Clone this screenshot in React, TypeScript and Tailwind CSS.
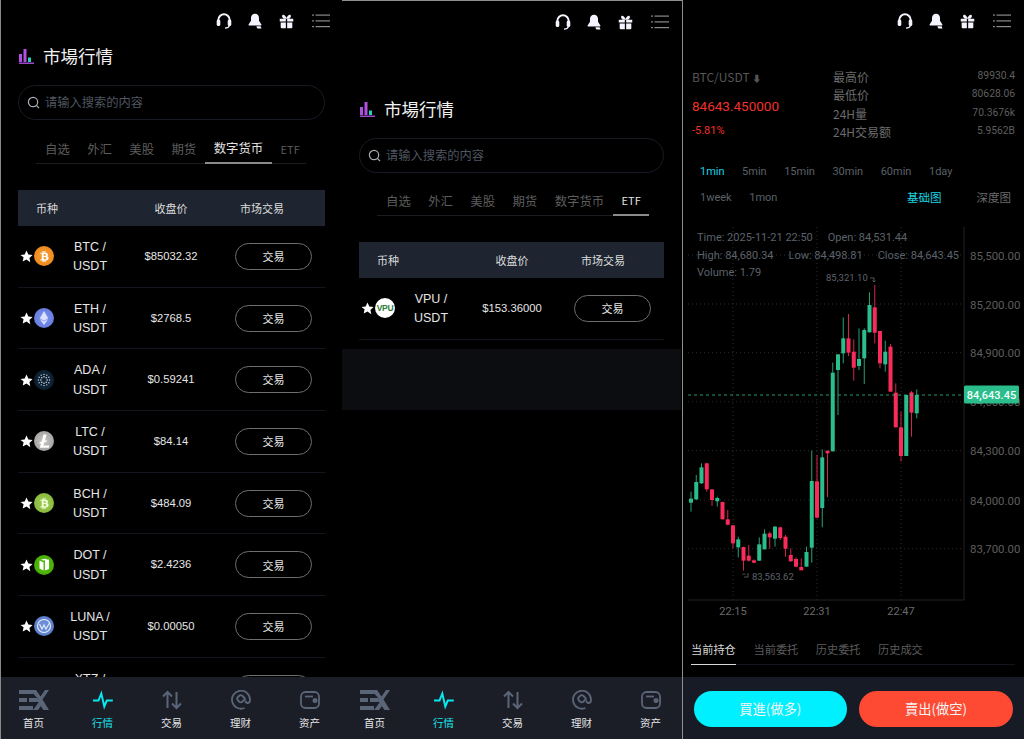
import { FaBtc, FaEthereum } from "react-icons/fa"
import type { ReactNode } from "react"

const coins = [
  { name: "BTC", price: "$85032.32" },
  { name: "ETH", price: "$2768.5" },
  { name: "ADA", price: "$0.59241" },
  { name: "LTC", price: "$84.14" },
  { name: "BCH", price: "$484.09" },
  { name: "DOT", price: "$2.4236" },
  { name: "LUNA", price: "$0.00050" },
  { name: "XTZ", price: "$0.5512" },
]

// wickTop, wickBottom, bodyTop, bodyBottom, up - measured at 3x, from the top of the chart
const candles: [number, number, number, number, number][] = [
  [815, 875, 836, 848, 1], [765, 840, 786, 838, 1], [730, 792, 742, 790, 1], [728, 815, 730, 808, 0],
  [808, 858, 808, 840, 0], [830, 860, 834, 844, 1], [845, 898, 846, 898, 0], [870, 916, 898, 914, 0],
  [915, 985, 916, 970, 0], [950, 1012, 958, 982, 1], [980, 1052, 981, 1022, 0], [975, 1025, 1007, 1022, 0],
  [1018, 1030, 1021, 1028, 0], [952, 1023, 973, 1022, 1], [928, 988, 941, 988, 1], [935, 986, 940, 952, 0],
  [918, 980, 920, 956, 1], [920, 960, 922, 954, 0], [945, 1010, 950, 986, 0], [985, 1025, 1005, 1024, 0],
  [1012, 1042, 1017, 1040, 0], [1015, 1050, 1041, 1051, 0], [980, 1040, 996, 1040, 1], [692, 1028, 783, 983, 1],
  [705, 895, 784, 893, 0], [688, 922, 712, 864, 1], [692, 832, 692, 700, 0], [428, 694, 458, 694, 1],
  [403, 585, 403, 450, 1], [292, 430, 355, 400, 1], [282, 408, 355, 398, 0], [358, 482, 395, 443, 0],
  [325, 450, 417, 438, 1], [325, 492, 330, 415, 1], [217, 337, 255, 337, 1], [195, 370, 262, 338, 0],
  [333, 445, 333, 430, 0], [362, 455, 395, 433, 1], [372, 515, 380, 515, 0], [490, 622, 518, 622, 0],
  [575, 725, 622, 708, 0], [525, 708, 525, 708, 1], [513, 650, 517, 578, 0], [508, 595, 525, 580, 1],
]

function TopBar() {
  return (
    <div className="h-[42px] shrink-0 flex items-center justify-end pr-[12px]">
      <svg viewBox="0 0 16 16" className="w-[16px] h-[16px] mr-[15px]" fill="none">
        <path d="M2.300 9V7a5.700 5.700 0 0 1 11.400 0v2" stroke="#f4f4ff" strokeWidth="2" />
        <rect x="0.700" y="6.500" width="3.600" height="6.500" rx="1.600" fill="#f4f4ff" />
        <rect x="11.700" y="6.500" width="3.600" height="6.500" rx="1.600" fill="#f4f4ff" />
        <path d="M13.500 12.500c-.6 1.800-2.200 2.600-4.500 2.600" stroke="#f4f4ff" strokeWidth="1.200" />
      </svg>
      <svg viewBox="0 0 16 16" className="w-[16px] h-[16px] mr-[16px]" fill="#f4f4ff">
        <path d="M8 .8c2.500 0 4 1.800 4 4.100v2.800l2.400 3.800c.2.400 0 .9-.5.900H2.100c-.5 0-.7-.5-.5-.9L4 7.700V4.900C4 2.600 5.500.8 8 .8z" />
        <path d="M9.500 13.200h4.100l.9 2.400h-3.300c-.9 0-1.600-1-1.700-2.400z" />
      </svg>
      <svg viewBox="0 0 16 16" className="w-[15px] h-[15px] mr-[18px]" fill="#f4f4ff">
        <path d="M.8 5h6.500v3H.8zM8.700 5h6.500v3H8.700zM1.800 9h5.500v6.300H3a1.200 1.200 0 0 1-1.200-1.200zM8.700 9h5.500v5.100c0 .7-.5 1.200-1.200 1.200H8.700z" />
        <path d="M3.800 1c1.300-.8 3.200.6 4.200 3.300C9 1.600 10.900.2 12.200 1c1.100.8.500 2.800-1.300 4H5.100C3.300 3.800 2.700 1.800 3.800 1z" />
      </svg>
      <svg viewBox="0 0 18 16" className="w-[18px] h-[16px]" fill="#8a8a8f">
        <rect x="0" y="1.500" width="2" height="1.200" />
        <rect x="3.500" y="1.500" width="14.500" height="1.200" />
        <rect x="0" y="7.300" width="2" height="1.200" />
        <rect x="3.500" y="7.300" width="14.500" height="1.200" />
        <rect x="0" y="13" width="2" height="1.200" />
        <rect x="3.500" y="13" width="14.500" height="1.200" />
      </svg>
    </div>
  )
}

function Title() {
  return (
    <div className="flex items-center h-[30px] pl-[18px] pb-[2px]">
      <svg viewBox="0 0 15 15" className="w-[15px] h-[15px] mr-[9px]">
        <rect x="0" y="5" width="3" height="8" fill="#b14fe0" />
        <rect x="4.500" y="0" width="3" height="13" fill="#b14fe0" />
        <rect x="9" y="8.500" width="3" height="4.500" fill="#22d3b6" />
        <rect x="0" y="13.500" width="15" height="1.500" fill="#9b45cc" />
      </svg>
      <span className="text-[17.500px] leading-[28px] text-[#f2f2f2] font-['Noto_Sans_CJK_SC',sans-serif]">市場行情</span>
    </div>
  )
}

function Search() {
  return (
    <div className="mx-[17px] h-[35px] rounded-full border border-[#171c24] flex items-center pl-[8px] pb-[1px] gap-[5px]">
      <svg viewBox="0 0 14 14" className="w-[13px] h-[13px]" fill="none" stroke="#a9adb3" strokeWidth="1.300">
        <circle cx="6.500" cy="6.500" r="5" />
        <path d="M10.200 10.200l2.800 2.800" />
      </svg>
      <span className="text-[12.250px] text-[#4f5561] font-['Noto_Sans_CJK_SC',sans-serif]">请输入搜索的内容</span>
    </div>
  )
}

function Tabs({ active }: { active: string }) {
  const tabs = ["自选", "外汇", "美股", "期货", "数字货币", "ETF"]
  return (
    <div className="ml-[35px] mr-[36px] mt-[14px] flex border-b border-[#1b1c22] h-[30px] pl-[9px] font-['Noto_Sans_CJK_SC',sans-serif]">
      {tabs.map((t, i) => (
        <div key={t} className={`flex items-center h-[30px] px-[8.700px] shrink-0 whitespace-nowrap ${t === "ETF" ? "text-[11px]" : "text-[12.400px]"} ${i === 0 ? "-ml-[8.700px]" : ""} ${active === t ? "text-[#e2e2e2] border-b-2 border-[#8a8a8a]" : "text-[#5c5c5c]"}`}>
          {t}
        </div>
      ))}
    </div>
  )
}

function TableHead() {
  return (
    <div className="mx-[17px] mt-[26px] h-[36px] bg-[#1e2530] flex items-center text-[11px] text-[#dcdcdc] font-['Noto_Sans_CJK_SC',sans-serif]">
      <span className="w-[108px] pl-[18px]">币种</span>
      <span className="w-[90px] text-center">收盘价</span>
      <span className="w-[92px] text-center">市场交易</span>
    </div>
  )
}

function CoinIcon({ name }: { name: string }) {
  if (name === "BTC") {
    return (
      <span className="w-[20px] h-[20px] rounded-full bg-[radial-gradient(circle,#f9a23b,#e9800f)] flex items-center justify-center text-white">
        <FaBtc className="w-[11px] h-[11px]" />
      </span>
    )
  }
  if (name === "ETH") {
    return (
      <span className="w-[20px] h-[20px] rounded-full bg-[radial-gradient(circle,#8097f0,#5a71d8)] flex items-center justify-center text-[#dbe2ff]">
        <FaEthereum className="w-[12px] h-[14px]" />
      </span>
    )
  }
  if (name === "ADA") {
    return (
      <span className="w-[20px] h-[20px] rounded-full bg-[#0e2133] flex items-center justify-center">
        <svg viewBox="0 0 20 20" className="w-[16px] h-[16px]" fill="#c9d6e4">
          {Array.from({ length: 12 }).map((_, i) => (
            <circle key={i} cx={10 + 7 * Math.cos((i * Math.PI) / 6)} cy={10 + 7 * Math.sin((i * Math.PI) / 6)} r="0.900" />
          ))}
          {Array.from({ length: 8 }).map((_, i) => (
            <circle key={i} cx={10 + 4 * Math.cos((i * Math.PI) / 4)} cy={10 + 4 * Math.sin((i * Math.PI) / 4)} r="1" />
          ))}
        </svg>
      </span>
    )
  }
  if (name === "LTC") {
    return (
      <span className="w-[20px] h-[20px] rounded-full bg-[radial-gradient(circle,#c8c6c4,#9a9896)] flex items-center justify-center">
        <svg viewBox="0 0 20 20" className="w-[20px] h-[20px]" fill="#fff">
          <path d="M9.500 3.500h3l-1.600 6.200 2-.8-.5 1.800-2.100.8-.9 3h6l-.6 2.200H5.800l1.300-4.400-1.700.7.4-1.700 1.900-.8z" />
        </svg>
      </span>
    )
  }
  if (name === "BCH") {
    return (
      <span className="w-[20px] h-[20px] rounded-full bg-[radial-gradient(circle,#a4cf58,#7cb232)] flex items-center justify-center text-[#f2ffe0]">
        <FaBtc className="w-[11px] h-[11px]" />
      </span>
    )
  }
  if (name === "DOT") {
    return (
      <span className="w-[20px] h-[20px] rounded-full bg-[radial-gradient(circle,#5cc212,#3fa400)] flex items-center justify-center">
        <svg viewBox="0 0 20 20" className="w-[20px] h-[20px]" fill="#fff">
          <path d="M5.500 5.500l4 2v8l-4-2zM11 5l4-.5V14l-4 1.500z" />
          <path d="M6.500 4.800L11 3.800l3 .5-4 1.300z" />
        </svg>
      </span>
    )
  }
  if (name === "LUNA") {
    return (
      <span className="w-[20px] h-[20px] rounded-full bg-[radial-gradient(circle,#7596dc,#4f74c4)] flex items-center justify-center">
        <svg viewBox="0 0 20 20" className="w-[20px] h-[20px]" fill="none" stroke="#e6edff" strokeWidth="1.100">
          <circle cx="10" cy="10" r="6.500" />
          <path d="M5.500 8l2.500 5 2-4 2 4 3.500-6" />
        </svg>
      </span>
    )
  }
  if (name === "VPU") {
    return (
      <span className="w-[20px] h-[20px] rounded-full bg-white flex items-center justify-center text-[8.500px] font-bold text-[#2f7d3a] tracking-[-0.3px] font-['Liberation_Sans',sans-serif]">
        VPU
      </span>
    )
  }
  return <span className="w-[20px] h-[20px] rounded-full bg-[#3a7fd5]" />
}

function Row({ name, price }: { name: string; price: string }) {
  return (
    <div className="mx-[17px] h-[61.700px] shrink-0 border-b border-[#14151c] flex items-center font-['Liberation_Sans','Noto_Sans_CJK_SC',sans-serif]">
      <svg viewBox="0 0 12 12" className="w-[13px] h-[13px] ml-[1.500px] mt-[1px] shrink-0" fill="#fff">
        <path d="M6 .5l1.700 3.600 3.900.5-2.900 2.700.8 3.900L6 8.800l-3.500 1.900.8-3.900L.4 4.600l3.900-.5z" />
      </svg>
      <span className="ml-[1.500px] shrink-0 flex"><CoinIcon name={name} /></span>
      <div className="w-[72px] pt-[2px] text-center text-[12.500px] leading-[19.300px] text-[#e6e6e6] shrink-0">
        <div>{name} /</div>
        <div>USDT</div>
      </div>
      <div className="w-[90px] text-center text-[11.250px] text-[#e6e6e6] shrink-0">{price}</div>
      <button className="ml-auto mr-[13px] w-[77px] h-[27px] rounded-full border border-[#6e6e6e] text-[11px] text-[#e8e8e8] font-['Noto_Sans_CJK_SC',sans-serif]">
        交易
      </button>
    </div>
  )
}

function NavItem({ label, active, children }: { label: string; active?: boolean; children: ReactNode }) {
  return (
    <div className="flex flex-col items-center">
      <div className="h-[22px] flex items-center justify-center">{children}</div>
      <span className={`mt-[5px] text-[10.500px] leading-[14px] font-['Noto_Sans_CJK_SC',sans-serif] ${active ? "text-[#19e3ea]" : "text-[#e4e5e8]"}`}>{label}</span>
    </div>
  )
}

function BottomNav() {
  return (
    <div className="h-[62px] shrink-0 bg-[#1c1e27]">
      <div className="grid grid-cols-[repeat(5,69px)] -ml-[2px] pt-[12px]">
        <NavItem label="首页">
          <svg viewBox="0 0 30 20" className="w-[30px] h-[20px]" fill="#5a6577">
            <path d="M0 0h14v4H0zM0 16h14v4H0zM0 8h8v4H0z" />
            <path d="M11 0h6l4.500 6.500L26 0h4l-6.500 9.500L30 20h-5.500L19 12l-2 0 2.500-2.500z" />
            <path d="M10 8h8l2 2-3 2h-7z" />
            <path d="M17 16l2.500-3.500 2.500 3.500-3 4h-5z" />
          </svg>
        </NavItem>
        <NavItem label="行情" active>
          <svg viewBox="0 0 20 20" className="w-[20px] h-[20px]" fill="none" stroke="#08e6ee" strokeWidth="2">
            <path d="M0 10.500h5.500l2.800-7 3 13 2.500-6h6" />
          </svg>
        </NavItem>
        <NavItem label="交易">
          <svg viewBox="0 0 20 20" className="w-[20px] h-[20px]" fill="none" stroke="#5a6577" strokeWidth="2">
            <path d="M5.500 18V2M1 6.500L5.500 2 10 6.500M14.500 2v16M10 13.500l4.500 4.500 4.500-4.500" />
          </svg>
        </NavItem>
        <NavItem label="理财">
          <svg viewBox="0 0 20 20" className="w-[20px] h-[20px]" fill="none" stroke="#5a6577" strokeWidth="1.800">
            <path d="M13.500 18A9 9 0 1 1 19 10c0 2-1 3-2.500 3s-2-1-2-2.500" />
            <path d="M14 8.500l-2.500-2.500c-1-1-2.500-1-3.500 0l-1 1c-1 1-1 2.500 0 3.500l1 1c1 1 2.500 1 3.500 0l3-3" />
          </svg>
        </NavItem>
        <NavItem label="资产">
          <svg viewBox="0 0 20 20" className="w-[20px] h-[20px]" fill="none" stroke="#5a6577" strokeWidth="1.800">
            <rect x="1" y="2" width="18" height="16" rx="4.500" />
            <path d="M5 6.500h8" />
            <circle cx="15" cy="10.500" r="1.600" fill="#5a6577" />
          </svg>
        </NavItem>
      </div>
    </div>
  )
}

function Chart() {
  const priceLabels = [
    { t: "85,500.00", z: 105 }, { t: "85,200.00", z: 252 }, { t: "84,900.00", z: 398 }, { t: "84,600.00", z: 545 },
    { t: "84,300.00", z: 692 }, { t: "84,000.00", z: 840 }, { t: "83,700.00", z: 986 },
  ]
  const times = [{ t: "22:15", z: 150 }, { t: "22:31", z: 402 }, { t: "22:47", z: 654 }]
  return (
    <div className="relative h-[400px] shrink-0">
      <svg viewBox="0 0 340 400" className="w-[340px] h-[400px] block">
        {priceLabels.map((p) => (
          <line key={p.t} x1="5" x2="281" y1={p.z / 3} y2={p.z / 3} stroke="#2c2c2c" strokeDasharray="1 3" />
        ))}
        {times.map((p) => (
          <line key={p.t} x1={p.z / 3} x2={p.z / 3} y1="7" y2="380" stroke="#2c2c2c" strokeDasharray="1 3" />
        ))}
        <path d="M5 380H281V7" fill="none" stroke="#222" />
        {candles.map((c, i) => {
          const x = (24 + 15.75 * i) / 3
          const color = c[4] ? "#2cbd8c" : "#f72c5b"
          return (
            <g key={i}>
              <line x1={x} x2={x} y1={c[0] / 3} y2={c[1] / 3} stroke={color} opacity="0.85" />
              <rect x={x - 2} width="4" y={c[2] / 3} height={Math.max((c[3] - c[2]) / 3, 1)} fill={color} />
            </g>
          )
        })}
        <g fontFamily="Roboto, sans-serif" fontSize="11.500" fill="#5d5d5d">
          {priceLabels.map((p) => (
            <text key={p.t} x="287" y={p.z / 3 + 4.500}>{p.t}</text>
          ))}
        </g>
        <g fontFamily="Roboto, sans-serif" fontSize="11" fill="#6a6a6a">
          {times.map((p) => (
            <text key={p.t} x={p.z / 3} y="395" textAnchor="middle">{p.t}</text>
          ))}
        </g>
        <g fontFamily="Roboto, sans-serif" fontSize="9.500" fill="#5f636b">
          <text x="143" y="61">85,321.10</text>
          <text x="69" y="360">83,563.62</text>
        </g>
        <path d="M187 58h4v4M189.500 60.500l1.500 1.500 1.500-1.500" fill="none" stroke="#777" strokeWidth="0.700" />
        <path d="M65 353v4h-4M59.500 355l1.500-1.500 1.500 1.500" fill="none" stroke="#777" strokeWidth="0.700" />
        <line x1="5" x2="281" y1="175" y2="175" stroke="#2cbd8c" strokeDasharray="3 3" opacity="0.8" />
        <rect x="281" y="165.500" width="55" height="18" rx="1.500" fill="#2cbd8c" />
        <text x="308.500" y="179" textAnchor="middle" fontFamily="Roboto, sans-serif" fontSize="11" fontWeight="500" fill="#f2fff9">84,643.45</text>
      </svg>
      <div className="absolute left-[14px] top-[9px] text-[11px] leading-[17.500px] text-[#5c626b] font-['Roboto',sans-serif]">
        <div className="flex gap-x-[15px]"><span>Time: 2025-11-21 22:50</span><span>Open: 84,531.44</span></div>
        <div className="flex gap-x-[15px]"><span>High: 84,680.34</span><span>Low: 84,498.81</span><span>Close: 84,643.45</span></div>
        <div>Volume: 1.79</div>
      </div>
    </div>
  )
}

function TradePanel() {
  const stats = [
    ["最高价", "89930.4"],
    ["最低价", "80628.06"],
    ["24H量", "70.3676k"],
    ["24H交易额", "5.9562B"],
  ]
  const frames = ["5min", "15min", "30min", "60min", "1day"]
  return (
    <div className="w-[341px] h-[739px] pr-[1px] flex flex-col overflow-hidden font-['Noto_Sans_CJK_SC',sans-serif]">
      <TopBar />
      <div className="flex h-[108px] pl-[9px] pr-[8px] pt-[27px] shrink-0">
        <div className="w-[141px] shrink-0">
          <div className="text-[12px] leading-[18px] text-[#575757] -mt-[1px]">BTC/USDT <span className="text-[9px]">⬇</span></div>
          <div className="mt-[8px] text-[13.500px] leading-[20px] text-[#f0302a] font-['Roboto',sans-serif]">84643.450000</div>
          <div className="mt-[7px] text-[11px] leading-[16px] text-[#f0302a] font-['Roboto',sans-serif]">-5.81%</div>
        </div>
        <div className="flex-1 -mt-[1px]">
          {stats.map(([k, v]) => (
            <div key={k} className="flex justify-between items-start h-[18.300px]">
              <span className="text-[12px] leading-[18.300px] text-[#6b6b6b]">{k}</span>
              <span className="text-[10.300px] leading-[15px] text-[#5f5f5f] font-['Roboto',sans-serif]">{v}</span>
            </div>
          ))}
        </div>
      </div>
      <div className="pl-[17px] pr-[12px] pt-[9px] text-[11px] font-['Roboto',sans-serif] shrink-0">
        <div className="flex gap-x-[17.500px] h-[26px] items-center text-[#5a6068]">
          <span className="text-[#19d3e0]">1min</span>
          {frames.map((f) => <span key={f}>{f}</span>)}
        </div>
        <div className="flex h-[26px] items-center text-[#5a6068]">
          <span>1week</span>
          <span className="ml-[17.500px]">1mon</span>
          <span className="ml-auto text-[#19d3e0] font-['Noto_Sans_CJK_SC',sans-serif] text-[11.500px]">基础图</span>
          <span className="ml-[35px] text-[#6b6b6b] font-['Noto_Sans_CJK_SC',sans-serif] text-[11.500px]">深度图</span>
        </div>
      </div>
      <div className="mt-[9px]"><Chart /></div>
      <div className="ml-[8px] mr-[8px] mt-[17px] h-[28px] border-b border-[#14141c] flex gap-x-[17.500px] text-[11.200px] leading-[24px] text-[#5c5c5c] shrink-0">
        <span className="h-[28px] w-[45px] border-b border-[#d8d8d8] text-[#d8d8d8]">当前持仓</span>
        <span>当前委托</span>
        <span>历史委托</span>
        <span>历史成交</span>
      </div>
      <div className="mt-[12px] -mr-[1px] h-[62px] bg-[#171b26] flex gap-x-[12px] pl-[10.500px] pt-[14px] shrink-0 text-[13.300px] text-[#f4f4f4]">
        <button className="w-[153.500px] h-[36px] rounded-full bg-[#00f0ff]">買進(做多)</button>
        <button className="w-[154px] h-[36px] rounded-full bg-[#ff4a33]">賣出(做空)</button>
      </div>
    </div>
  )
}

export default function App() {
  return (
    <div className="w-[1024px] h-[739px] bg-black flex overflow-hidden">
      <div className="w-[342px] h-[739px] border-l border-[#8a8a8a] flex flex-col overflow-hidden">
        <TopBar />
        <Title />
        <div className="mt-[13px]"><Search /></div>
        <Tabs active="数字货币" />
        <TableHead />
        <div className="flex-1 overflow-hidden">
          {coins.map((c) => <Row key={c.name} name={c.name} price={c.price} />)}
        </div>
        <BottomNav />
      </div>
      <div className="w-[341px] h-[739px] border-t border-r border-[#8f8f8f] flex flex-col overflow-hidden">
        <div className="pr-[1px] flex flex-col flex-1 overflow-hidden">
          <TopBar />
          <div className="mt-[52px]"><Title /></div>
          <div className="mt-[13px]"><Search /></div>
          <div className="-mt-[1px]"><Tabs active="ETF" /></div>
          <TableHead />
          <div className="flex-1 overflow-hidden">
            <Row name="VPU" price="$153.36000" />
            <div className="mt-[9px] h-[61px] bg-[#0c0d10]" />
          </div>
        </div>
        <BottomNav />
      </div>
      <TradePanel />
    </div>
  )
}
